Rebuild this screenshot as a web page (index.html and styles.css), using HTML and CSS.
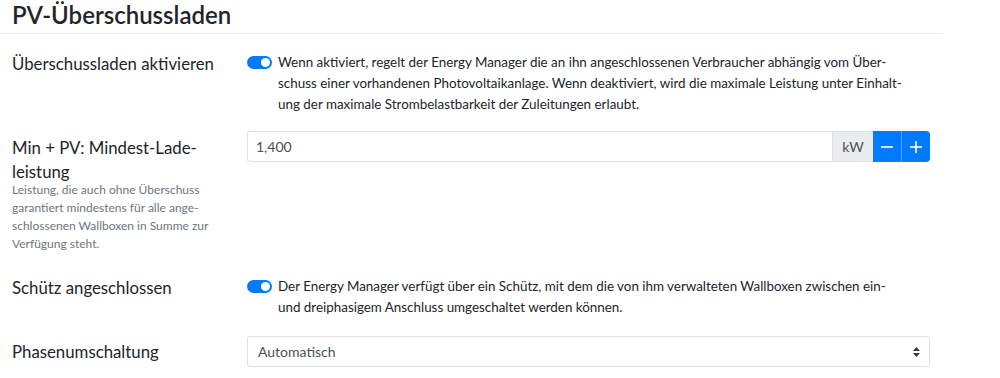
FILE: index.html
```html
<!DOCTYPE html>
<html lang="de">
<head>
  <meta charset="UTF-8">
  <meta name="viewport" content="width=device-width, initial-scale=1.0">
  <title>PV-Überschussladen</title>
  <link rel="stylesheet" href="styles.css">
</head>
<body>

<div class="page">
  <h2 class="pageTitle">PV-Überschussladen</h2>

  <form class="settings">
    <!-- Überschussladen an/aus -->
    <div class="formRow">
      <label class="rowLabel">Überschussladen aktivieren</label>
      <div class="rowField switchField">
        <span class="switch on"><span class="knob"></span></span>
        <span class="switchText">Wenn aktiviert, regelt der Energy Manager die an ihn angeschlossenen Verbraucher abhängig vom Über-<br>schuss einer vorhandenen Photovoltaikanlage. Wenn deaktiviert, wird die maximale Leistung unter Einhalt-<br>ung der maximale Strombelastbarkeit der Zuleitungen erlaubt.</span>
      </div>
    </div>

    <!-- Mindestladeleistung -->
    <div class="formRow">
      <div class="rowLabel labelTight">
        <label>Min + PV: Mindest-Lade-<br>leistung</label>
        <span class="helpText">Leistung, die auch ohne Überschuss<br>garantiert mindestens für alle ange-<br>schlossenen Wallboxen in Summe zur<br>Verfügung steht.</span>
      </div>
      <div class="rowField">
        <div class="inputGroup">
          <input class="numInput" type="text" value="1,400">
          <span class="unit">kW</span>
          <button type="button" class="stepBtn">
            <svg width="12" height="12" viewBox="0 0 12 12"><line x1="0" y1="6" x2="12" y2="6" stroke="#fff" stroke-width="1.6"/></svg>
          </button>
          <button type="button" class="stepBtn last">
            <svg width="12" height="12" viewBox="0 0 12 12"><line x1="0" y1="6" x2="12" y2="6" stroke="#fff" stroke-width="1.6"/><line x1="6" y1="0" x2="6" y2="12" stroke="#fff" stroke-width="1.6"/></svg>
          </button>
        </div>
      </div>
    </div>

    <!-- Schütz -->
    <div class="formRow spaced">
      <label class="rowLabel">Schütz angeschlossen</label>
      <div class="rowField switchField">
        <span class="switch on"><span class="knob"></span></span>
        <span class="switchText">Der Energy Manager verfügt über ein Schütz, mit dem die von ihm verwalteten Wallboxen zwischen ein-<br>und dreiphasigem Anschluss umgeschaltet werden können.</span>
      </div>
    </div>

    <!-- Phasenumschaltung -->
    <div class="formRow">
      <label class="rowLabel labelSmall">Phasenumschaltung</label>
      <div class="rowField">
        <div class="selectBox">
          <span>Automatisch</span>
          <svg width="7" height="10" viewBox="0 0 7 10"><path d="M3.5 0 L7 4 H0 Z M3.5 10 L0 6 H7 Z" fill="#343a40"/></svg>
        </div>
      </div>
    </div>
  </form>
</div>

</body>
</html>
```

FILE: styles.css
```css
body {
  margin: 0;
  font-family: Lato, "Liberation Sans", sans-serif;
  color: #212529;
  background-color: #fff;
}
.page {
  width: 943px;
}
.pageTitle {
  margin: 0;
  padding: 1px 0 4px 12px;
  font-size: 24px;
  line-height: 28px;
  font-weight: 600;
  border-bottom: 1px solid #ececec;
}
.settings {
  margin-top: 11px;
  padding-left: 12px;
}
.formRow {
  display: grid;
  grid-template-columns: 223px 683px;
  column-gap: 12px;
  margin-bottom: 16px;
}
.formRow.spaced {
  margin-bottom: 18px;
}
.rowLabel {
  padding-top: 7px;
  font-size: 16.8px;
  line-height: 24px;
}
.labelTight {
  padding-top: 5px;
}
.labelSmall {
  padding-top: 4px;
}
.helpText {
  display: block;
  margin-top: -3px;
  font-size: 12px;
  line-height: 18px;
  color: #6c757d;
}
.switchField {
  display: flex;
  align-items: flex-start;
  padding-top: 7px;
}
.switch {
  flex: none;
  width: 25px;
  height: 13px;
  margin-top: 4px;
  border-radius: 7px;
  background-color: #007bff;
  display: flex;
  align-items: center;
  justify-content: flex-end;
}
.knob {
  width: 9px;
  height: 9px;
  margin-right: 2px;
  border-radius: 50%;
  background-color: #fff;
}
.switchText {
  margin-left: 6px;
  font-size: 13.4px;
  line-height: 21px;
  white-space: nowrap;
}
.inputGroup {
  display: flex;
  height: 31px;
}
.numInput {
  flex: 1;
  min-width: 0;
  margin: 0;
  padding: 0 8px;
  border: 1px solid #dde1e5;
  border-right: none;
  border-radius: 3px 0 0 3px;
  font-family: inherit;
  font-size: 14px;
  color: #495057;
  outline: none;
}
.unit {
  width: 41px;
  box-sizing: border-box;
  display: flex;
  align-items: center;
  justify-content: center;
  background-color: #e9ecef;
  border: 1px solid #dde1e5;
  border-right: none;
  font-size: 14px;
  color: #495057;
}
.stepBtn {
  width: 28px;
  padding: 0;
  margin: 0;
  border: none;
  background-color: #007bff;
  display: flex;
  align-items: center;
  justify-content: center;
  cursor: pointer;
}
.stepBtn.last {
  width: 29px;
  border-left: 1px solid #5aa9ff;
  border-radius: 0 4px 4px 0;
}
.selectBox {
  height: 31px;
  box-sizing: border-box;
  padding: 0 9px 0 10px;
  border: 1px solid #dde1e5;
  border-radius: 3px;
  display: flex;
  align-items: center;
  justify-content: space-between;
  font-size: 14px;
  color: #495057;
}
```
